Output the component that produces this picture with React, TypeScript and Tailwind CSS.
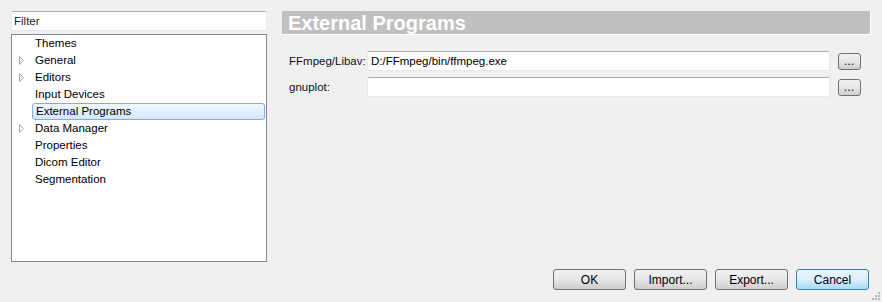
import React from "react";

const FONT = { fontFamily: '"Liberation Sans", Arial, sans-serif' };

const treeItems = [
  { label: "Themes", arrow: false },
  { label: "General", arrow: true },
  { label: "Editors", arrow: true },
  { label: "Input Devices", arrow: false },
  { label: "External Programs", arrow: false, selected: true },
  { label: "Data Manager", arrow: true },
  { label: "Properties", arrow: false },
  { label: "Dicom Editor", arrow: false },
  { label: "Segmentation", arrow: false },
];

function Arrow() {
  return (
    <svg width="7" height="9" viewBox="0 0 7 9" className="block">
      <path d="M1.5 0.5 L5.5 4.5 L1.5 8.5 Z" fill="none" stroke="#a6a6a6" strokeWidth="1" />
    </svg>
  );
}

function Button({ label, primary }: { label: string; primary?: boolean }) {
  const cls = primary
    ? "border-[#3c7fb1] bg-linear-to-b from-[#eaf6fd] via-[#d9f0fc] to-[#a7d9f5]"
    : "border-[#707070] bg-linear-to-b from-[#f2f2f2] via-[#e6e6e6] to-[#cfcfcf]";
  return (
    <div
      className={`w-[73px] h-[21px] rounded-[3px] border flex items-center justify-center pt-[1px] text-[12px] text-black ${cls}`}
    >
      {label}
    </div>
  );
}

function Browse() {
  return (
    <div className="w-[23px] h-[17px] rounded-[3px] border border-[#707070] bg-linear-to-b from-[#f2f2f2] via-[#e6e6e6] to-[#cfcfcf] flex items-end justify-center pb-[2px]">
      <span className="text-[9px] leading-[9px] font-bold text-[#1c1c6c] tracking-[1px]">...</span>
    </div>
  );
}

function Field({ value }: { value?: string }) {
  return (
    <div className="flex-1 h-[20px] rounded-[2px] border border-[#e3e9ef] border-t-[#abadb3] bg-white flex items-center pt-[1px] px-[3px] text-[11.5px] text-black">
      {value}
    </div>
  );
}

export default function App() {
  return (
    <div className="w-[882px] h-[302px] bg-[#f0f0f0] relative flex flex-col pt-[11px] pl-[11px] pr-[11px] select-none" style={FONT}>
      <div className="flex gap-[15px]">
        <div className="w-[256px] flex flex-col gap-[3px]">
          <div className="h-[20px] rounded-[2px] border border-[#e3e9ef] border-t-[#abadb3] bg-white flex items-center pt-[1px] px-[2px] text-[11.5px] text-[#222]">
            Filter
          </div>
          <div className="h-[228px] border border-[#828790] bg-white">
            {treeItems.map((it) => (
              <div key={it.label} className="h-[17px] flex items-center">
                <div className="w-[20px] flex justify-end pr-[7px]">{it.arrow && <Arrow />}</div>
                <div
                  className={`h-[17px] flex items-center pt-[1px] px-[3px] text-[11.5px] text-black ${
                    it.selected
                      ? "w-[233px] rounded-[3px] border border-[#84acdd] bg-linear-to-b from-[#f2f8fe] to-[#d3e6fd] px-[2px]"
                      : ""
                  }`}
                >
                  {it.label}
                </div>
              </div>
            ))}
          </div>
        </div>
        <div className="flex-1 flex flex-col">
          <div className="h-[24px] bg-[#c0c0c0] border-r border-b border-white flex items-center pt-[1px] pl-[6px] text-[20px] font-bold text-white">
            External Programs
          </div>
          <div className="mt-[16px] flex flex-col gap-[6px] pl-[7px] pr-[10px]">
            <div className="flex items-center">
              <div className="w-[78px] pt-[1px] text-[11.5px] text-[#111]">FFmpeg/Libav:</div>
              <Field value="D:/FFmpeg/bin/ffmpeg.exe" />
              <div className="ml-[8px]">
                <Browse />
              </div>
            </div>
            <div className="flex items-center">
              <div className="w-[78px] pt-[1px] text-[11.5px] text-[#111]">gnuplot:</div>
              <Field />
              <div className="ml-[8px]">
                <Browse />
              </div>
            </div>
          </div>
        </div>
      </div>
      <div className="mt-[7px] flex justify-end gap-[8px] pr-[2px]">
        <Button label="OK" />
        <Button label="Import..." />
        <Button label="Export..." />
        <Button label="Cancel" primary />
      </div>
      <svg width="10" height="10" viewBox="0 0 10 10" className="absolute right-[1px] bottom-[1px]">
        {[
          [7, 1],
          [4, 4],
          [7, 4],
          [1, 7],
          [4, 7],
          [7, 7],
        ].map(([x, y]) => (
          <rect key={`${x}-${y}`} x={x} y={y} width="2" height="2" fill="#b8b8b8" />
        ))}
      </svg>
    </div>
  );
}
